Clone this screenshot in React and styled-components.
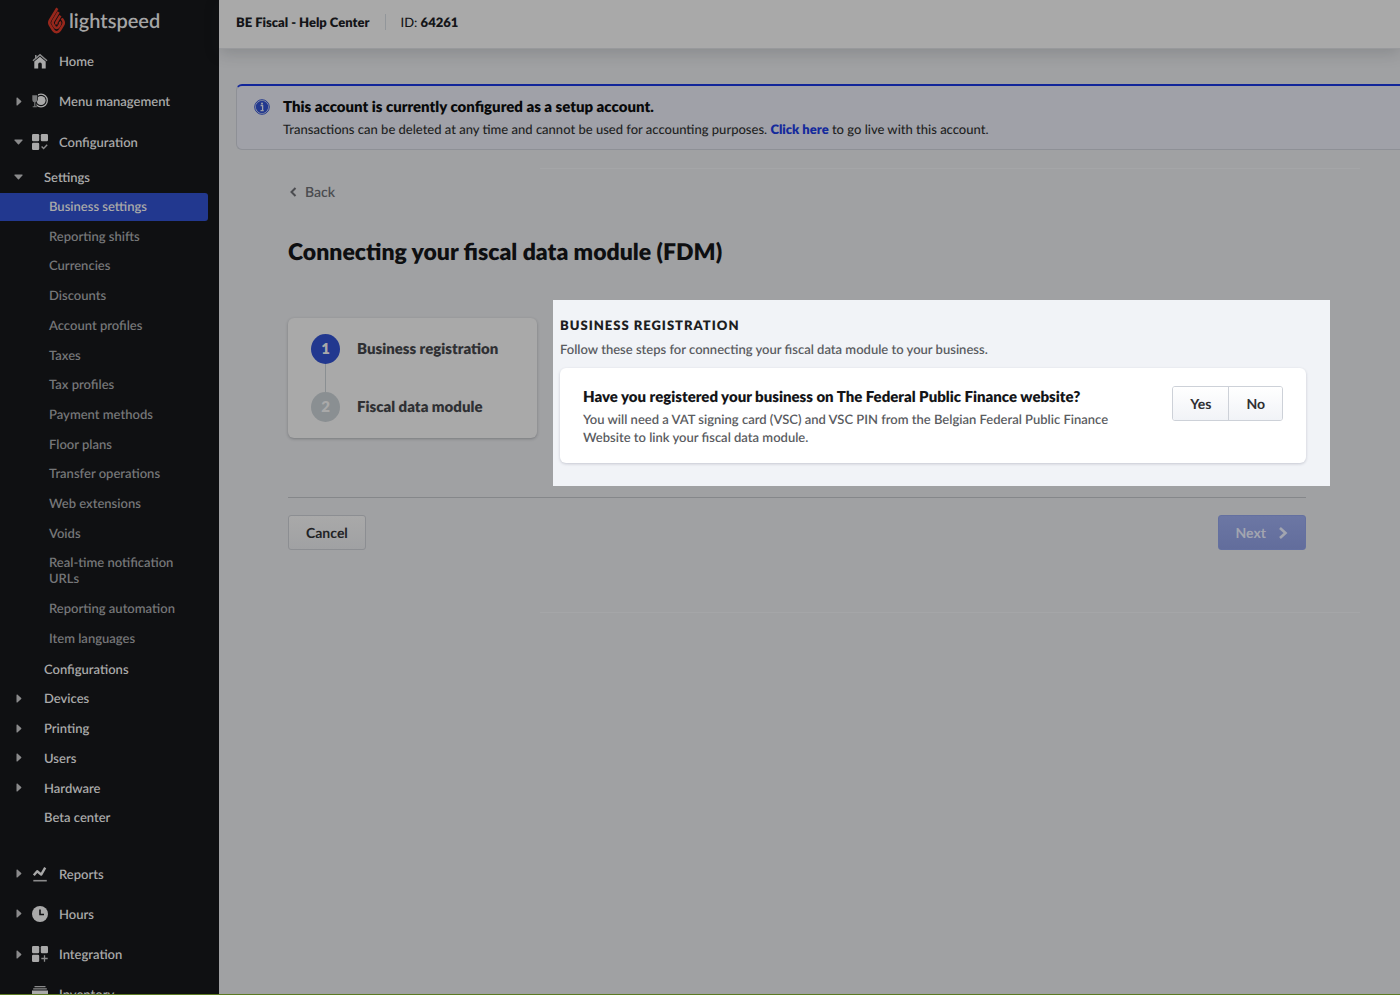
import React from "react";
import styled, { createGlobalStyle, css } from "styled-components";

const GlobalStyle = createGlobalStyle`
  * { box-sizing: border-box; }
  html, body, #root { height: 100%; }
  body {
    margin: 0;
    background: #a0a1a3;
    color: #141518;
    font-family: Lato, "Liberation Sans", sans-serif;
    font-size: 13px;
    font-weight: 500;
    line-height: 16px;
    text-rendering: geometricPrecision;
    overflow: hidden;
  }
  h1, h2, h3, p, ul, ol { margin: 0; padding: 0; }
  ul, ol { list-style: none; }
  button { font-family: inherit; text-rendering: inherit; cursor: pointer; }
`;

const Page = styled.div`
  display: flex;
  height: 100vh;
  overflow: hidden;
  border-bottom: 1px solid #5c7a22;
`;

/* ---------- Sidebar ---------- */

const Sidebar = styled.nav`
  flex: none;
  width: 219px;
  overflow: hidden;
  background: #0f1012;
  color: #a9a9a9;
`;

const Brand = styled.a`
  display: flex;
  align-items: center;
  gap: 4px;
  height: 41px;
  padding-left: 48px;
  color: #a5a5a5;
  text-decoration: none;
  font-size: 20px;
  font-weight: 600;
  line-height: 24px;
`;

const NavList = styled.ul`
  display: flex;
  flex-direction: column;
  justify-content: space-between;
  height: ${(p) => p.$height}px;
  margin-bottom: ${(p) => p.$after || 0}px;
`;

const itemBase = css`
  display: flex;
  align-items: center;
  width: 100%;
  border: 0;
  background: none;
  color: #a9a9a9;
  font-size: 13px;
  font-weight: 600;
  line-height: 16px;
  text-align: left;
  text-decoration: none;
`;

const MainItem = styled.a`
  ${itemBase}
  height: 40px;
  padding: 0 0 1px 14px;
`;

const GroupItem = styled.a`
  ${itemBase}
  height: 28px;
  padding: 0 0 1px 14px;
`;

const SubItem = styled.a`
  ${itemBase}
  width: 208px;
  min-height: 28px;
  padding: 5px 24px 7px 49px;
  border-radius: 0 3px 3px 0;
  color: ${(p) => (p.$active ? "#a9a9a9" : "#757678")};
  background: ${(p) => (p.$active ? "#22388f" : "none")};
`;

const CaretSlot = styled.span`
  flex: none;
  display: flex;
  justify-content: center;
  width: 9px;
  margin-right: ${(p) => (p.$wide ? 21 : 9)}px;
  color: #8a8a8b;
`;

const IconSlot = styled.span`
  flex: none;
  display: flex;
  width: 16px;
  margin-right: 11px;
`;

/* ---------- Main ---------- */

const Main = styled.div`
  flex: 1;
  min-width: 0;
`;

const TopBar = styled.header`
  display: flex;
  align-items: center;
  height: 49px;
  padding: 0 17px 4px;
  background: #a9a9a9;
  border-bottom: 1px solid #98999c;
  box-shadow: 0 4px 16px rgba(30, 32, 40, 0.18);
  strong { font-weight: 800; }
`;

const AccountName = styled.strong`
  padding-right: 16px;
  border-right: 1px solid #92969a;
  margin-right: 14px;
`;

const Notice = styled.section`
  display: flex;
  gap: 13px;
  margin: 35px 0 0 17px;
  padding: 11px 17px 8px;
  border: 1px solid #8e9096;
  border-top: 2px solid #12269a;
  border-right: 0;
  border-radius: 6px 0 0 6px;
  background: #a0a1a8;
`;

const NoticeIcon = styled.span`
  flex: none;
  display: flex;
  padding-top: 2px;
`;

const NoticeTitle = styled.h2`
  font-size: 15px;
  font-weight: 800;
  line-height: 20px;
  color: #08090a;
`;

const NoticeText = styled.p`
  line-height: 24px;
  color: #1e1f22;
`;

const NoticeLink = styled.a`
  color: #142a9c;
  font-weight: 800;
  text-decoration: none;
`;

const Rule = styled.hr`
  height: 1px;
  margin: ${(p) => p.$top}px 40px 0 321px;
  border: 0;
  background: #a5a6a8;
`;

const Content = styled.main`
  padding: 13px 70px 0 69px;
`;

const BackLink = styled.a`
  display: inline-flex;
  align-items: center;
  gap: 8px;
  padding-left: 1px;
  font-size: 14px;
  line-height: 20px;
  color: #4b4c50;
  font-weight: 600;
  text-decoration: none;
`;

const Title = styled.h1`
  margin-top: 33px;
  font-size: 23px;
  font-weight: 800;
  line-height: 32px;
  color: #0e0f11;
`;

const Columns = styled.div`
  display: flex;
  align-items: flex-start;
  gap: 16px;
  margin-top: 33px;
`;

const Steps = styled.ol`
  flex: none;
  width: 249px;
  margin-top: 18px;
  padding: 16px 23px;
  border-radius: 6px;
  background: #a9a9a9;
  box-shadow: 0 1px 3px rgba(30, 32, 40, 0.3);
`;

const Step = styled.li`
  display: flex;
  align-items: center;
  gap: 17px;
  font-size: 15px;
  font-weight: 800;
  color: #2f3033;
`;

const StepNumber = styled.span`
  display: grid;
  place-items: center;
  width: 29px;
  height: 30px;
  border-radius: 50%;
  background: ${(p) => (p.$active ? "#22388f" : "#8a8f92")};
  color: #a9a9a9;
`;

const StepLink = styled.li`
  width: 1px;
  height: 28px;
  margin-left: 14px;
  background: #8a8f92;
`;

const Spotlight = styled.section`
  flex: 1;
  min-width: 0;
  padding: 15px 24px 23px 7px;
  background: #f1f3f7;
`;

const SectionTitle = styled.h2`
  font-size: 13px;
  font-weight: 800;
  line-height: 20px;
  letter-spacing: 1px;
  text-transform: uppercase;
  color: #1d1e21;
`;

const SectionText = styled.p`
  line-height: 24px;
  margin: 2px 0 7px;
  font-weight: 600;
  color: #5a5c61;
`;

const Question = styled.div`
  display: flex;
  align-items: flex-start;
  justify-content: space-between;
  gap: 24px;
  padding: 18px 23px 17px;
  border-radius: 6px;
  background: #fff;
  box-shadow: 0 1px 3px rgba(30, 32, 60, 0.2);
`;

const QuestionTitle = styled.h3`
  font-size: 15px;
  font-weight: 800;
  line-height: 22px;
  color: #141518;
`;

const QuestionText = styled.p`
  max-width: 560px;
  margin-top: 2px;
  line-height: 18px;
  font-weight: 600;
  color: #5a5c61;
`;

const Choice = styled.div`
  flex: none;
  display: flex;
  border: 1px solid #cdd1d8;
  border-radius: 3px;
  overflow: hidden;
`;

const ChoiceButton = styled.button`
  height: 33px;
  padding: 0 17px;
  border: 0;
  background: linear-gradient(#fff, #f1f3f7);
  color: #2f3033;
  font-size: 14px;
  font-weight: 700;
  & + & { border-left: 1px solid #cdd1d8; }
`;

const Footer = styled.footer`
  display: flex;
  justify-content: space-between;
  margin: 11px 24px 0 0;
  padding-top: 17px;
  border-top: 1px solid #85878a;
`;

const ActionButton = styled.button`
  display: flex;
  align-items: center;
  gap: 12px;
  height: 35px;
  padding: 0 17px;
  border: 1px solid ${(p) => (p.$primary ? "#6470a0" : "#8c8e92")};
  border-radius: 3px;
  background: ${(p) => (p.$primary ? "linear-gradient(#6c77a4, #626d9c)" : "linear-gradient(#a9a9a9, #a0a1a3)")};
  color: ${(p) => (p.$primary ? "#a2a5b0" : "#222326")};
  font-size: 14px;
  font-weight: 700;
`;

/* ---------- Icons ---------- */

const Caret = ({ open }) =>
  open ? (
    <svg width="9" height="6" viewBox="0 0 9 6" fill="currentColor"><path d="M1 .5h7c.5 0 .7.5.4.9L5 5.2c-.3.3-.7.3-1 0L.6 1.400C.3 1 .5.500 1 .5z" /></svg>
  ) : (
    <svg width="6" height="9" viewBox="0 0 6 9" fill="currentColor"><path d="M.5 1v7c0 .5.5.7.9.4L5.200 5c.3-.3.3-.7 0-1L1.400.6C1 .3.500.5.5 1z" /></svg>
  );

const Flame = () => (
  <svg width="17" height="27" viewBox="0 0 17 27" fill="none" stroke="#97271c" strokeWidth="2.600" strokeLinejoin="round">
    <path d="M9.300 1.200 2 13.200c-1 1.700-1 3.200 0 4.800l3.300 5.300c1.600 2.500 4.900 2.500 6.500 0l3.200-5.200c1-1.600 1-3.100 0-4.700l-1.300-2" />
    <path d="M10.600 5 5 14.200c-.6 1-.6 1.900 0 2.900l1.600 2.600c1 1.500 2.900 1.500 3.900 0l1.300-2.100c.6-1 .6-1.900 0-2.900" />
    <path d="M12.400 8.600 8.300 15.600v2" />
  </svg>
);

const icons = {
  home: (
    <svg width="16" height="16" viewBox="0 0 16 16" fill="#a9a9a9">
      <path d="M8 .8 15.500 7.300l-.9 1L8 2.700 1.400 8.300l-.9-1L3 5.100V2h1.500v1.800z" fill="#8a8a8b" />
      <path d="M8 3.800 13.700 8.600v7H9.800v-4.300a1.800 1.800 0 0 0-3.600 0v4.300H2.300v-7z" />
    </svg>
  ),
  menu: (
    <svg width="16" height="16" viewBox="0 0 16 16">
      <circle cx="9" cy="7.500" r="6.300" fill="none" stroke="#a9a9a9" strokeWidth="1.300" />
      <circle cx="9" cy="7.500" r="4.600" fill="#a9a9a9" />
      <path d="M-.5 1h6.500v5.500l-1.500 3v5.500h-5z" fill="#0f1012" />
      <path d="M.3 2.300h5v4.200c0 1.600-.8 2.500-1.900 2.800v3.900h1.500v1H.7v-1h1.500V9.300C1.100 9 .3 8.100.3 6.500z" fill="#777879" />
    </svg>
  ),
  config: (
    <svg width="16" height="16" viewBox="0 0 16 16" fill="#a9a9a9">
      <rect width="7.200" height="7.200" rx="1.200" /><rect x="8.800" width="7.200" height="7.200" rx="1.200" /><rect y="8.800" width="7.200" height="7.200" rx="1.200" />
      <path d="m9.600 12.500 2 2 3.600-3.800" fill="none" stroke="#8a8a8b" strokeWidth="1.400" />
    </svg>
  ),
  reports: (
    <svg width="16" height="16" viewBox="0 0 16 16" fill="none">
      <path d="m1.800 9.300 3.400-4 4 3.300 4-7" stroke="#a9a9a9" strokeWidth="2.400" strokeLinejoin="round" />
      <path d="M1.300 14.700h13.500" stroke="#8a8a8b" strokeWidth="1.600" />
    </svg>
  ),
  hours: (
    <svg width="16" height="16" viewBox="0 0 16 16">
      <circle cx="8" cy="8" r="8" fill="#a9a9a9" />
      <path d="M8 3.500v5h4" fill="none" stroke="#0f1012" strokeWidth="1.600" />
    </svg>
  ),
  integration: (
    <svg width="16" height="16" viewBox="0 0 16 16" fill="#a9a9a9">
      <rect width="7.200" height="7.200" rx="1.200" /><rect x="8.800" width="7.200" height="7.200" rx="1.200" /><rect y="8.800" width="7.200" height="7.200" rx="1.200" />
      <path d="M12.500 9.300v6.400M9.300 12.500h6.400" fill="none" stroke="#8a8a8b" strokeWidth="1.300" />
    </svg>
  ),
  inventory: (
    <svg width="16" height="16" viewBox="0 0 16 16" fill="#a9a9a9">
      <path d="M2.500 0h11v1.200h-11zM1.200 2.200h13.600v1.200H1.200z" fill="#8a8a8b" />
      <path d="M0 4.500h16v9a2 2 0 0 1-2 2H2a2 2 0 0 1-2-2z" />
    </svg>
  ),
};

const InfoIcon = () => (
  <svg width="16" height="16" viewBox="0 0 16 16">
    <circle cx="8" cy="8" r="7.300" fill="#a0a1a8" stroke="#22388f" strokeWidth="1" />
    <circle cx="8" cy="8" r="6.200" fill="#22388f" />
    <circle cx="8" cy="4.400" r="1" fill="#a0a1a8" />
    <path d="M6.600 6.500h2v5M6.500 11.700h3.200" fill="none" stroke="#a0a1a8" strokeWidth="1.300" />
  </svg>
);

/* ---------- Data ---------- */

const topItems = [
  { label: "Home", icon: "home" },
  { label: "Menu management", icon: "menu", caret: true },
  { label: "Configuration", icon: "config", caret: true, open: true },
];

const settings = [
  "Business settings", "Reporting shifts", "Currencies", "Discounts", "Account profiles",
  "Taxes", "Tax profiles", "Payment methods", "Floor plans", "Transfer operations",
  "Web extensions", "Voids", "Real-time notification URLs", "Reporting automation", "Item languages",
];

const groups = [
  { label: "Configurations" },
  { label: "Devices", caret: true },
  { label: "Printing", caret: true },
  { label: "Users", caret: true },
  { label: "Hardware", caret: true },
  { label: "Beta center" },
];

const bottomItems = [
  { label: "Reports", icon: "reports", caret: true },
  { label: "Hours", icon: "hours", caret: true },
  { label: "Integration", icon: "integration", caret: true },
  { label: "Inventory", icon: "inventory" },
];

const linkOrToggle = ({ caret, open }) =>
  caret ? { as: "button", type: "button", "aria-expanded": !!open } : { href: "#" };

const MainEntry = ({ item }) => (
  <li>
    <MainItem {...linkOrToggle(item)}>
      <CaretSlot>{item.caret && <Caret open={item.open} />}</CaretSlot>
      <IconSlot>{icons[item.icon]}</IconSlot>
      {item.label}
    </MainItem>
  </li>
);

const GroupEntry = ({ item }) => (
  <li>
    <GroupItem {...linkOrToggle(item)}>
      <CaretSlot $wide>{item.caret && <Caret open={item.open} />}</CaretSlot>
      {item.label}
    </GroupItem>
  </li>
);

export default function App() {
  return (
    <>
      <GlobalStyle />
      <Page>
        <Sidebar>
          <Brand href="#"><Flame />lightspeed</Brand>
          <NavList $height={121} $after={1}>
            {topItems.map((i) => <MainEntry key={i.label} item={i} />)}
          </NavList>
          <NavList $height={28} $after={2}>
            <GroupEntry item={{ label: "Settings", caret: true, open: true }} />
          </NavList>
          <NavList $height={460} $after={2}>
            {settings.map((label, n) => (
              <li key={label}><SubItem href="#" $active={n === 0}>{label}</SubItem></li>
            ))}
          </NavList>
          <NavList $height={177} $after={22}>
            {groups.map((i) => <GroupEntry key={i.label} item={i} />)}
          </NavList>
          <NavList $height={161}>
            {bottomItems.map((i) => <MainEntry key={i.label} item={i} />)}
          </NavList>
        </Sidebar>

        <Main>
          <TopBar>
            <AccountName>BE Fiscal - Help Center</AccountName>
            <span>ID: <strong>64261</strong></span>
          </TopBar>

          <Notice>
            <NoticeIcon><InfoIcon /></NoticeIcon>
            <div>
              <NoticeTitle>This account is currently configured as a setup account.</NoticeTitle>
              <NoticeText>
                Transactions can be deleted at any time and cannot be used for accounting purposes.{" "}
                <NoticeLink href="#">Click here</NoticeLink> to go live with this account.
              </NoticeText>
            </div>
          </Notice>

          <Rule $top={18} />

          <Content>
            <BackLink href="#">
              <svg width="8" height="10" viewBox="0 0 8 10" fill="none" stroke="currentColor" strokeWidth="2"><path d="M6.500 1 2.500 5l4 4" /></svg>
              Back
            </BackLink>
            <Title>Connecting your fiscal data module (FDM)</Title>

            <Columns>
              <Steps>
                <Step><StepNumber $active>1</StepNumber>Business registration</Step>
                <StepLink aria-hidden="true" />
                <Step><StepNumber>2</StepNumber>Fiscal data module</Step>
              </Steps>

              <Spotlight>
                <SectionTitle>Business registration</SectionTitle>
                <SectionText>Follow these steps for connecting your fiscal data module to your business.</SectionText>
                <Question>
                  <div>
                    <QuestionTitle>Have you registered your business on The Federal Public Finance website?</QuestionTitle>
                    <QuestionText>
                      You will need a VAT signing card (VSC) and VSC PIN from the Belgian Federal Public Finance
                      Website to link your fiscal data module.
                    </QuestionText>
                  </div>
                  <Choice role="group" aria-label="Registered">
                    <ChoiceButton type="button">Yes</ChoiceButton>
                    <ChoiceButton type="button">No</ChoiceButton>
                  </Choice>
                </Question>
              </Spotlight>
            </Columns>

            <Footer>
              <ActionButton type="button">Cancel</ActionButton>
              <ActionButton type="button" $primary>
                Next
                <svg width="10" height="12" viewBox="0 0 10 12" fill="none" stroke="currentColor" strokeWidth="2.600"><path d="m2 1 5.500 5L2 11" /></svg>
              </ActionButton>
            </Footer>
          </Content>

          <Rule $top={62} />
        </Main>
      </Page>
    </>
  );
}
